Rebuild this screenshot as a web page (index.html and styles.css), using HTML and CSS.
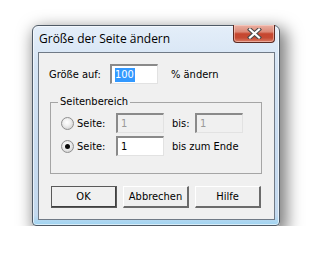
FILE: index.html
```html
<!DOCTYPE html>
<html lang="de">
<head>
<meta charset="utf-8">
<title>Größe der Seite ändern</title>
<link rel="stylesheet" href="styles.css">
</head>
<body>
<div class="window">
  <div class="titlebar">
    <span class="title">Größe der Seite ändern</span>
    <button class="close" aria-label="Schließen">
      <svg width="15" height="11" viewBox="0 0 15 11">
        <path d="M3 1.5 L12 9.5 M12 1.5 L3 9.5" stroke="#4a4a4a" stroke-width="4.2" stroke-linecap="square" fill="none"/>
        <path d="M3 1.5 L12 9.5 M12 1.5 L3 9.5" stroke="#ffffff" stroke-width="2.2" stroke-linecap="square" fill="none"/>
      </svg>
    </button>
  </div>
  <div class="client">
    <div class="row top-row">
      <span class="lbl-size">Größe auf:</span>
      <span class="field"><span class="sel">100</span></span>
      <span class="after">% ändern</span>
    </div>
    <fieldset class="group">
      <legend>Seitenbereich</legend>
      <div class="row grp-row">
        <span class="radio"></span>
        <span class="lbl-page">Seite:</span>
        <span class="field disabled">1</span>
        <span class="after bis">bis:</span>
        <span class="field disabled">1</span>
      </div>
      <div class="row grp-row">
        <span class="radio checked"></span>
        <span class="lbl-page">Seite:</span>
        <span class="field">1</span>
        <span class="after">bis zum Ende</span>
      </div>
    </fieldset>
    <div class="buttons">
      <button class="btn default">OK</button>
      <button class="btn">Abbrechen</button>
      <button class="btn">Hilfe</button>
    </div>
  </div>
</div>
</body>
</html>
```
FILE: styles.css
```css
html, body {
  margin: 0;
  padding: 0;
  background: #ffffff;
}
body {
  font-family: "DejaVu Sans Condensed", "Liberation Sans", sans-serif;
  font-size: 11px;
  color: #000;
}
.window {
  margin: 25px 0 0 32px;
  width: 248px;
  height: 201px;
  box-sizing: border-box;
  border: 1px solid #4f5a66;
  border-radius: 6px 6px 4px 4px;
  background: linear-gradient(180deg, #e4eef9 0%, #d5e4f4 20%, #c9dcf0 60%, #c4d9ee 95%, #9fd4f2 100%);
  box-shadow: 4px 6px 16px 3px rgba(0,0,0,0.5), inset 0 0 0 1px rgba(255,255,255,0.6);
  display: flex;
  flex-direction: column;
}
.titlebar {
  height: 26px;
  display: flex;
  justify-content: space-between;
  align-items: flex-start;
  padding: 0 4px 0 6px;
}
.title {
  font-family: "Open Sans", "Noto Sans", sans-serif;
  font-size: 12px;
  line-height: 16px;
  margin-top: 5px;
  color: #000;
}
.close {
  width: 42px;
  height: 18px;
  margin-top: -1px;
  padding: 0;
  border: 1px solid #5c2a22;
  border-top: none;
  border-radius: 0 0 4px 4px;
  background: linear-gradient(180deg, #eab0a3 0%, #dc8a78 40%, #c6462f 52%, #c54a33 75%, #db7d66 100%);
  box-shadow: inset 0 0 0 1px rgba(255,220,210,0.5);
  display: flex;
  align-items: center;
  justify-content: center;
}
.close svg { display: block; }
.client {
  flex: 1;
  margin: 0 4px 5px 5px;
  border: 1px solid #707a86;
  background: #f0f0f0;
  padding: 11px 12px 0 10px;
}
.row {
  display: flex;
  align-items: center;
  height: 20px;
}
.lbl-size { width: 61px; }
.after { margin-left: 8px; }
.after.bis { width: 23px; }
.top-row .after { margin-left: 13px; }
.field {
  width: 48px;
  height: 20px;
  flex: none;
  box-sizing: border-box;
  border-style: solid;
  border-width: 2px 1px 1px 2px;
  border-color: #8a8a8a #e2e2e2 #e2e2e2 #8a8a8a;
  background: #fff;
  padding: 0 0 0 3px;
  display: flex;
  align-items: center;
  line-height: 14px;
}
.field.disabled {
  background: #f0f0f0;
  color: #9a9a9a;
}
.sel {
  background: #3399ff;
  color: #fff;
  padding: 0 1px 0 0;
}
.group {
  margin: 11px 0 0 1px;
  width: 212px;
  box-sizing: border-box;
  border: 1px solid #a5a5a5;
  padding: 4px 10px 17px 10px;
}
.group legend {
  padding: 0 2px;
  margin-left: -3px;
  line-height: 14px;
}
.grp-row + .grp-row { margin-top: 3px; }
.radio {
  width: 13px;
  height: 13px;
  flex: none;
  box-sizing: border-box;
  border-radius: 50%;
  border: 1px solid #8f8f8f;
  background: radial-gradient(circle at 45% 40%, #ffffff 0%, #f2f2f2 35%, #d6d6d6 75%, #c2c2c2 100%);
  margin-right: 3px;
  position: relative;
}
.radio.checked::after {
  content: "";
  position: absolute;
  left: 3px;
  top: 3px;
  width: 5px;
  height: 5px;
  border-radius: 50%;
  background: #0a0a0a;
}
.lbl-page { width: 39px; flex: none; }
.buttons {
  display: flex;
  gap: 6px;
  margin: 12px 0 0 2px;
}
.btn {
  width: 66px;
  height: 22px;
  font: inherit;
  color: #000;
  background: #f0f0f0;
  border-style: solid;
  border-width: 1px 2px 2px 1px;
  border-color: #ffffff #6b6b6b #6b6b6b #ffffff;
  padding: 0;
}
.btn.default {
  border-width: 1px 2px 2px 1px;
  border-color: #ffffff #404040 #404040 #ffffff;
  outline: 1px solid #5a5a5a;
  outline-offset: -1px;
}
```
